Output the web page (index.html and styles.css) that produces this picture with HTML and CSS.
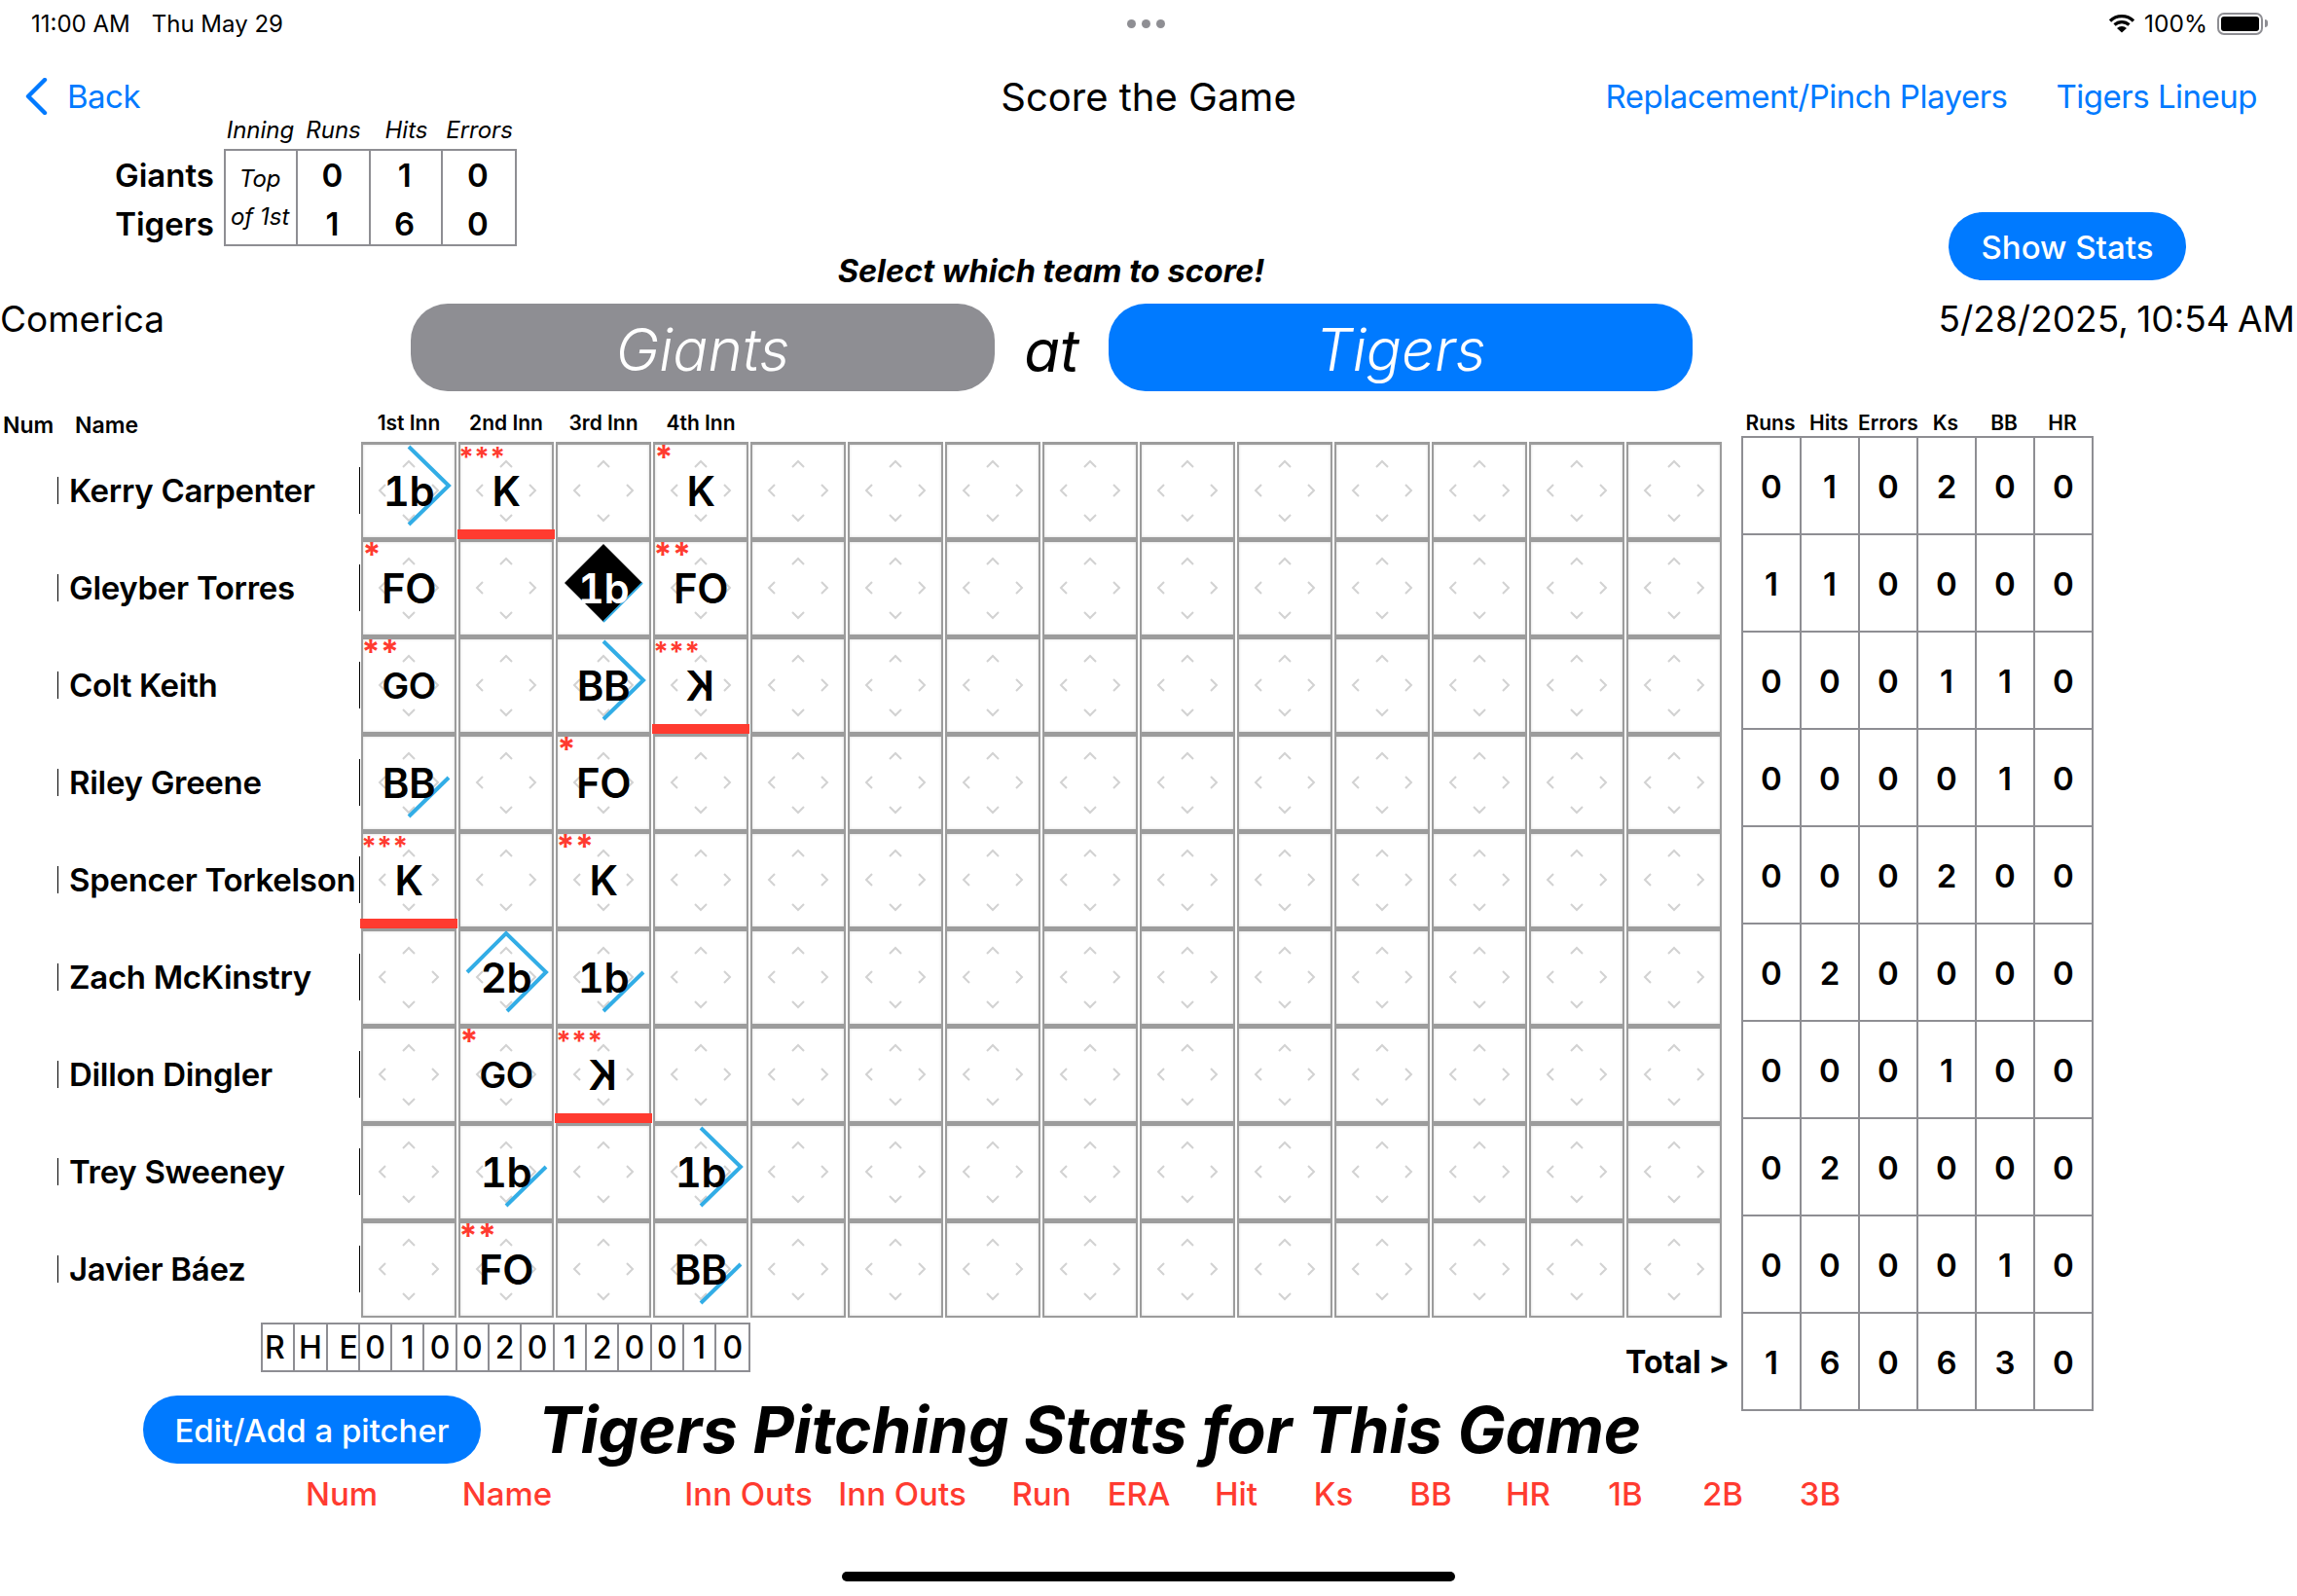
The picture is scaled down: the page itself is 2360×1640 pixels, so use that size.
FILE: index.html
```html
<!DOCTYPE html>
<html lang="en">
<head>
    <meta charset="UTF-8">
    <title>Score the Game</title>
    <link rel="stylesheet" href="styles.css">
</head>
<body>
<svg class="defs" width="0" height="0">
    <symbol id="b1" viewBox="0 0 98 99"><path d="M49 85L90 45"/></symbol>
    <symbol id="b2" viewBox="0 0 98 99"><path d="M49 85L90 45L49 5"/></symbol>
    <symbol id="b3" viewBox="0 0 98 99"><path d="M50 85L90 45L49 5L9 45"/></symbol>
    <symbol id="home" viewBox="0 0 98 99"><path fill="#000" stroke="none" d="M49 5L89 45L49 85L9 45Z"/><path stroke-width="2" d="M49 85L89 45"/></symbol>
</svg>

<div class="page">
    <div class="status">
        <span class="clock">11:00 AM</span>
        <span class="date">Thu May 29</span>
        <div class="dots"><i></i><i></i><i></i></div>
        <div class="status-right">
            <svg class="wifi" width="28" height="20" viewBox="0 0 28 20"><path d="M2 7.5a17 17 0 0 1 24 0M6.5 11.5a11 11 0 0 1 15 0" fill="none" stroke="#000" stroke-width="3.2"/><path d="M14 19.5l-5-4.6a7.5 7.5 0 0 1 10 0z"/></svg>
            <span>100%</span>
            <div class="battery"><div class="battery-fill"></div></div>
            <div class="battery-tip"></div>
        </div>
    </div>

    <div class="nav">
        <a class="back">
            <svg width="24" height="38" viewBox="0 0 24 38"><path d="M21 2L4 19l17 17" fill="none" stroke="#007aff" stroke-width="4.4" stroke-linecap="round" stroke-linejoin="round"/></svg>
            Back
        </a>
        <div class="title">Score the Game</div>
        <div class="nav-links">
            <a>Replacement/Pinch Players</a>
            <a>Tigers Lineup</a>
        </div>
    </div>

    <div class="upper">
        <div class="scoreboard">
            <div></div>
            <div class="sb-labels"><span>Inning</span><span>Runs</span><span>Hits</span><span>Errors</span></div>
            <div class="sb-names"><span>Giants</span><span>Tigers</span></div>
            <div class="sb-body">
                <div class="sb-cell inn-top">Top</div><div class="sb-cell">0</div><div class="sb-cell">1</div><div class="sb-cell">0</div>
                <div class="sb-cell inn-bot">of 1st</div><div class="sb-cell">1</div><div class="sb-cell">6</div><div class="sb-cell">0</div>
            </div>
        </div>
        <div class="prompt">Select which team to score!</div>
        <a class="btn btn-stats">Show Stats</a>
    </div>

    <div class="teams">
        <div class="park">Comerica</div>
        <div class="team-btn team-away">Giants</div>
        <div class="at">at</div>
        <div class="team-btn team-home">Tigers</div>
        <div class="when">5/28/2025, 10:54 AM</div>
    </div>

    <div class="main">
        <div class="lineup">
            <div class="head-row">
                <span class="head-num">Num</span>
                <span class="head-name">Name</span>
                <div class="head-inn"><span>1st Inn</span><span>2nd Inn</span><span>3rd Inn</span><span>4th Inn</span></div>
            </div>

            <div class="row">
                <i class="tick"></i><div class="name">Kerry Carpenter</div><i class="tick"></i>
                <div class="cells">
                    <div class="cell"><svg class="mark"><use href="#b2"/></svg><span>1b</span></div>
                    <div class="cell"><b class="stars s3">***</b><span>K</span><i class="out"></i></div>
                    <div class="cell"></div>
                    <div class="cell"><b class="stars s1">*</b><span>K</span></div>
                    <div class="cell"></div><div class="cell"></div><div class="cell"></div><div class="cell"></div><div class="cell"></div><div class="cell"></div><div class="cell"></div><div class="cell"></div><div class="cell"></div><div class="cell"></div>
                </div>
            </div>
            <div class="row">
                <i class="tick"></i><div class="name">Gleyber Torres</div><i class="tick"></i>
                <div class="cells">
                    <div class="cell"><b class="stars s1">*</b><span>FO</span></div>
                    <div class="cell"></div>
                    <div class="cell"><svg class="mark"><use href="#home"/></svg><span class="light">1b</span></div>
                    <div class="cell"><b class="stars s2">**</b><span>FO</span></div>
                    <div class="cell"></div><div class="cell"></div><div class="cell"></div><div class="cell"></div><div class="cell"></div><div class="cell"></div><div class="cell"></div><div class="cell"></div><div class="cell"></div><div class="cell"></div>
                </div>
            </div>
            <div class="row">
                <i class="tick"></i><div class="name">Colt Keith</div><i class="tick"></i>
                <div class="cells">
                    <div class="cell"><b class="stars s2">**</b><span class="go">GO</span></div>
                    <div class="cell"></div>
                    <div class="cell"><svg class="mark"><use href="#b2"/></svg><span>BB</span></div>
                    <div class="cell"><b class="stars s3">***</b><span class="flip">K</span><i class="out"></i></div>
                    <div class="cell"></div><div class="cell"></div><div class="cell"></div><div class="cell"></div><div class="cell"></div><div class="cell"></div><div class="cell"></div><div class="cell"></div><div class="cell"></div><div class="cell"></div>
                </div>
            </div>
            <div class="row">
                <i class="tick"></i><div class="name">Riley Greene</div><i class="tick"></i>
                <div class="cells">
                    <div class="cell"><svg class="mark"><use href="#b1"/></svg><span>BB</span></div>
                    <div class="cell"></div>
                    <div class="cell"><b class="stars s1">*</b><span>FO</span></div>
                    <div class="cell"></div>
                    <div class="cell"></div><div class="cell"></div><div class="cell"></div><div class="cell"></div><div class="cell"></div><div class="cell"></div><div class="cell"></div><div class="cell"></div><div class="cell"></div><div class="cell"></div>
                </div>
            </div>
            <div class="row">
                <i class="tick"></i><div class="name">Spencer Torkelson</div><i class="tick"></i>
                <div class="cells">
                    <div class="cell"><b class="stars s3">***</b><span>K</span><i class="out"></i></div>
                    <div class="cell"></div>
                    <div class="cell"><b class="stars s2">**</b><span>K</span></div>
                    <div class="cell"></div>
                    <div class="cell"></div><div class="cell"></div><div class="cell"></div><div class="cell"></div><div class="cell"></div><div class="cell"></div><div class="cell"></div><div class="cell"></div><div class="cell"></div><div class="cell"></div>
                </div>
            </div>
            <div class="row">
                <i class="tick"></i><div class="name">Zach McKinstry</div><i class="tick"></i>
                <div class="cells">
                    <div class="cell"></div>
                    <div class="cell"><svg class="mark"><use href="#b3"/></svg><span>2b</span></div>
                    <div class="cell"><svg class="mark"><use href="#b1"/></svg><span>1b</span></div>
                    <div class="cell"></div>
                    <div class="cell"></div><div class="cell"></div><div class="cell"></div><div class="cell"></div><div class="cell"></div><div class="cell"></div><div class="cell"></div><div class="cell"></div><div class="cell"></div><div class="cell"></div>
                </div>
            </div>
            <div class="row">
                <i class="tick"></i><div class="name">Dillon Dingler</div><i class="tick"></i>
                <div class="cells">
                    <div class="cell"></div>
                    <div class="cell"><b class="stars s1">*</b><span class="go">GO</span></div>
                    <div class="cell"><b class="stars s3">***</b><span class="flip">K</span><i class="out"></i></div>
                    <div class="cell"></div>
                    <div class="cell"></div><div class="cell"></div><div class="cell"></div><div class="cell"></div><div class="cell"></div><div class="cell"></div><div class="cell"></div><div class="cell"></div><div class="cell"></div><div class="cell"></div>
                </div>
            </div>
            <div class="row">
                <i class="tick"></i><div class="name">Trey Sweeney</div><i class="tick"></i>
                <div class="cells">
                    <div class="cell"></div>
                    <div class="cell"><svg class="mark"><use href="#b1"/></svg><span>1b</span></div>
                    <div class="cell"></div>
                    <div class="cell"><svg class="mark"><use href="#b2"/></svg><span>1b</span></div>
                    <div class="cell"></div><div class="cell"></div><div class="cell"></div><div class="cell"></div><div class="cell"></div><div class="cell"></div><div class="cell"></div><div class="cell"></div><div class="cell"></div><div class="cell"></div>
                </div>
            </div>
            <div class="row">
                <i class="tick"></i><div class="name">Javier Báez</div><i class="tick"></i>
                <div class="cells">
                    <div class="cell"></div>
                    <div class="cell"><b class="stars s2">**</b><span>FO</span></div>
                    <div class="cell"></div>
                    <div class="cell"><svg class="mark"><use href="#b1"/></svg><span>BB</span></div>
                    <div class="cell"></div><div class="cell"></div><div class="cell"></div><div class="cell"></div><div class="cell"></div><div class="cell"></div><div class="cell"></div><div class="cell"></div><div class="cell"></div><div class="cell"></div>
                </div>
            </div>

            <div class="line-row">
                <div class="linescore">
                    <span class="l">R</span><span>H</span><span class="r">E</span><span>0</span><span>1</span><span>0</span><span>0</span><span>2</span><span>0</span><span>1</span><span>2</span><span>0</span><span>0</span><span>1</span><span>0</span>
                </div>
                <div class="total">Total &gt;</div>
            </div>
        </div>

        <div class="stats">
            <div class="stats-head"><span>Runs</span><span>Hits</span><span>Errors</span><span>Ks</span><span>BB</span><span>HR</span></div>
            <div class="stats-body">
                <span>0</span><span>1</span><span>0</span><span>2</span><span>0</span><span>0</span>
                <span>1</span><span>1</span><span>0</span><span>0</span><span>0</span><span>0</span>
                <span>0</span><span>0</span><span>0</span><span>1</span><span>1</span><span>0</span>
                <span>0</span><span>0</span><span>0</span><span>0</span><span>1</span><span>0</span>
                <span>0</span><span>0</span><span>0</span><span>2</span><span>0</span><span>0</span>
                <span>0</span><span>2</span><span>0</span><span>0</span><span>0</span><span>0</span>
                <span>0</span><span>0</span><span>0</span><span>1</span><span>0</span><span>0</span>
                <span>0</span><span>2</span><span>0</span><span>0</span><span>0</span><span>0</span>
                <span>0</span><span>0</span><span>0</span><span>0</span><span>1</span><span>0</span>
                <span>1</span><span>6</span><span>0</span><span>6</span><span>3</span><span>0</span>
            </div>
        </div>
    </div>

    <div class="pitcher">
        <a class="btn btn-edit">Edit/Add a pitcher</a>
        <h1>Tigers Pitching Stats for This Game</h1>
    </div>

    <div class="pitch-cols">
        <span>Num</span><span>Name</span><span>Inn Outs</span><span>Inn Outs</span>
        <span class="col-run">Run</span><span>ERA</span><span>Hit</span><span>Ks</span><span>BB</span><span>HR</span><span>1B</span><span>2B</span><span>3B</span>
    </div>

    <div class="home-bar"></div>
</div>
</body>
</html>
```

FILE: styles.css
```css
* {
    box-sizing: border-box;
}
body {
    margin: 0;
    background: #fff;
    color: #000;
    font-family: Inter, "Noto Sans", sans-serif;
}
a {
    color: #007aff;
}
.defs {
    position: absolute;
}
.page {
    width: 2360px;
    height: 1640px;
    overflow: hidden;
}

/* status bar */
.status {
    height: 48px;
    display: flex;
    align-items: center;
    padding: 0 30px 0 32px;
    font-size: 24px;
    position: relative;
}
.date {
    margin-left: 22px;
}
.dots {
    position: absolute;
    left: 1158px;
    top: 20px;
    display: flex;
    gap: 6px;
}
.dots i {
    width: 9px;
    height: 9px;
    border-radius: 50%;
    background: #8e8e93;
}
.status-right {
    margin-left: auto;
    display: flex;
    align-items: center;
}
.status-right span {
    margin: 0 10px 0 9px;
    font-size: 24.5px;
}
.battery {
    width: 47px;
    height: 23px;
    border: 2px solid #8e8e93;
    border-radius: 7px;
    padding: 2px;
}
.battery-fill {
    height: 100%;
    background: #000;
    border-radius: 3px;
}
.battery-tip {
    width: 3px;
    height: 8px;
    margin-left: 2px;
    background: #8e8e93;
    border-radius: 0 3px 3px 0;
}

/* nav */
.nav {
    height: 46px;
    margin-top: 29px;
    padding-bottom: 2px;
    display: flex;
    align-items: center;
    position: relative;
    font-size: 33px;
    letter-spacing: -0.5px;
}
.back {
    display: flex;
    align-items: center;
    gap: 20px;
    margin-left: 25px;
}
.title {
    position: absolute;
    left: 0;
    right: 0;
    text-align: center;
    font-size: 40px;
    letter-spacing: 0;
}
.nav-links {
    margin-left: auto;
    margin-right: 41px;
    display: flex;
    gap: 50px;
}

/* little scoreboard */
.upper {
    height: 189px;
    display: flex;
}
.scoreboard {
    display: grid;
    grid-template-columns: 230px 301px;
    grid-template-rows: 30px 100px;
}
.sb-labels {
    display: grid;
    grid-template-columns: repeat(4, 75px);
    font-size: 24px;
    font-style: italic;
    text-align: center;
    line-height: 22px;
}
.sb-names {
    display: flex;
    flex-direction: column;
    align-items: flex-end;
    padding-right: 10px;
    padding-top: 2px;
    font-size: 33px;
    font-weight: 600;
}
.sb-names span {
    height: 50px;
    line-height: 50px;
}
.sb-body {
    display: grid;
    grid-template-columns: repeat(4, 1fr);
    grid-auto-rows: 48px;
    border: 2px solid #8e8e93;
    font-size: 33px;
    font-weight: 600;
    text-align: center;
}
.sb-cell {
    border-right: 2px solid #8e8e93;
    padding-right: 2px;
    line-height: 50px;
}
.sb-cell:nth-child(4n) {
    border-right: 0;
}
.sb-cell:nth-child(5),
.sb-cell:nth-child(6),
.sb-cell:nth-child(7),
.sb-cell:nth-child(8) {
    padding-top: 2px;
}
.sb-body .inn-top,
.sb-body .inn-bot {
    font-size: 24px;
    font-style: italic;
    font-weight: 400;
}
.sb-body .inn-top {
    padding-top: 4px;
}
.sb-body .inn-bot {
    padding-top: 0;
    line-height: 40px;
}
.prompt {
    align-self: flex-end;
    width: 1098px;
    padding-bottom: 14px;
    text-align: center;
    font-size: 32.5px;
    font-weight: 700;
    font-style: italic;
}
.btn {
    display: flex;
    align-items: center;
    justify-content: center;
    height: 70px;
    padding-top: 2px;
    border-radius: 35px;
    background: #007aff;
    color: #fff;
    font-size: 33px;
    font-weight: 500;
}
.btn-stats {
    width: 244px;
    margin: 95px 0 0 373px;
}

/* team buttons */
.teams {
    height: 91px;
    margin-bottom: 17px;
    display: flex;
    font-size: 37px;
}
.park {
    width: 422px;
    line-height: 32px;
}
.team-btn {
    width: 600px;
    height: 90px;
    padding-top: 3px;
    border-radius: 38px;
    display: flex;
    align-items: center;
    justify-content: center;
    color: #fff;
    font-size: 60px;
    font-weight: 300;
    font-style: italic;
}
.team-away {
    background: #8e8e93;
}
.team-home {
    background: #007aff;
}
.at {
    width: 117px;
    padding-top: 3px;
    text-align: center;
    font-size: 60px;
    font-style: italic;
    line-height: 90px;
}
.when {
    flex: 1;
    text-align: right;
    white-space: nowrap;
    line-height: 32px;
    padding-right: 2px;
    word-spacing: -2px;
}

/* scoring grid */
.main {
    height: 1014px;
    display: flex;
}
.lineup {
    width: 1789px;
}
.head-row {
    height: 34px;
    display: flex;
    font-size: 23px;
    font-weight: 600;
    line-height: 34px;
}
.head-num {
    margin-left: 3px;
    width: 74px;
}
.head-name {
    width: 294px;
}
.head-inn {
    display: flex;
    font-size: 21px;
    font-weight: 600;
    line-height: 30px;
}
.head-inn span {
    width: 100px;
    padding-right: 2px;
    text-align: center;
}
.row {
    height: 100px;
    display: flex;
    align-items: center;
}
.tick {
    width: 1px;
    height: 48px;
    background: #000;
}
.row .tick:first-child {
    height: 28px;
    margin-left: 59px;
}
.name {
    width: 298px;
    margin-left: 11px;
    font-size: 33px;
    font-weight: 600;
    letter-spacing: -0.3px;
    white-space: nowrap;
}
.cells {
    display: flex;
    gap: 2px;
    margin-left: 1px;
    height: 100px;
}
.cell {
    position: relative;
    width: 98px;
    height: 100px;
    border: 2px solid #9c9c9c;
    border-top-width: 3px;
    box-shadow: inset 0 0 3px rgba(0, 0, 0, 0.15);
    background-origin: border-box;
    background-image: url("data:image/svg+xml,%3Csvg xmlns='http://www.w3.org/2000/svg' width='98' height='99'%3E%3Cpath d='M43 26l6-6 6 6M43 75l6 6 6-6M25 44l-6 6 6 6M73 44l6 6-6 6' fill='none' stroke='%23d2d2d2' stroke-width='2'/%3E%3C/svg%3E");
    display: flex;
    align-items: center;
    justify-content: center;
    font-size: 42px;
    font-weight: 600;
    font-variant-numeric: tabular-nums;
    letter-spacing: -0.5px;
}
.cell span {
    position: relative;
}
.cell .go {
    font-size: 37px;
}
.cell .light {
    color: #fff;
}
.cell .flip {
    transform: scaleX(-1);
}
.mark {
    position: absolute;
    left: -2px;
    top: -3px;
    width: 98px;
    height: 99px;
    fill: none;
    stroke: #32ade6;
    stroke-width: 4;
}
.stars {
    position: absolute;
    color: #ff3b30;
    font-weight: 700;
    line-height: 1;
}
.s1 {
    left: -2px;
    top: -4px;
    font-size: 34px;
}
.s2 {
    left: -3px;
    top: -4px;
    font-size: 34px;
    letter-spacing: -2.5px;
}
.s3 {
    left: -3px;
    top: -1px;
    font-size: 28px;
    letter-spacing: -2px;
}
.out {
    position: absolute;
    left: -3px;
    top: 87px;
    width: 100px;
    height: 10px;
    background: #ff3b30;
}

/* R H E strip */
.line-row {
    display: flex;
    margin-top: 5px;
    padding-left: 268px;
}
.linescore {
    display: flex;
    height: 51px;
    border: 2px solid #8e8e93;
    font-size: 32px;
    font-weight: 500;
}
.linescore span {
    width: 33.3px;
    border-right: 2px solid #8e8e93;
    text-align: center;
    line-height: 48px;
}
.linescore span:last-child {
    border-right: 0;
}
.linescore .l {
    text-align: left;
    padding-left: 2px;
}
.linescore .r {
    text-align: right;
}
.total {
    margin-left: auto;
    margin-right: 12px;
    margin-top: 21px;
    font-size: 32px;
    font-weight: 700;
}

/* stats table on the right */
.stats-head {
    height: 28px;
    display: flex;
    font-size: 21px;
    font-weight: 600;
    line-height: 30px;
}
.stats-head span {
    width: 60px;
    text-align: center;
}
.stats-body {
    width: 362px;
    display: grid;
    grid-template-columns: repeat(6, 60px);
    grid-auto-rows: 100px;
    border-top: 2px solid #8e8e93;
    border-left: 2px solid #8e8e93;
}
.stats-body span {
    border-right: 2px solid #8e8e93;
    border-bottom: 2px solid #8e8e93;
    text-align: center;
    line-height: 100px;
    font-size: 33px;
    font-weight: 600;
}

/* pitcher section */
.pitcher {
    height: 70px;
    display: flex;
    align-items: center;
    padding-left: 147px;
}
.btn-edit {
    width: 347px;
}
.pitcher h1 {
    margin: 0 0 0 59px;
    font-size: 65.5px;
    font-weight: 700;
    font-style: italic;
    white-space: nowrap;
}
.pitch-cols {
    margin: 11px 0 0 301px;
    height: 40px;
    display: grid;
    grid-template-columns: 100px 240px 256px 60px 63px repeat(9, 100px);
    justify-items: center;
    color: #ff3b30;
    font-size: 33px;
    font-weight: 500;
    white-space: nowrap;
}
.col-run {
    grid-column: 6;
}
.home-bar {
    width: 630px;
    height: 10px;
    margin: 60px auto 0;
    border-radius: 5px;
    background: #000;
}
```
